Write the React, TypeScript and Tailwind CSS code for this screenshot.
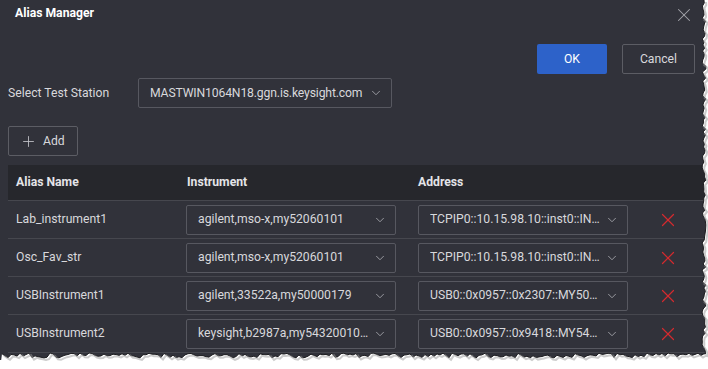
import { ChevronDown, Plus, X } from "lucide-react";

const rows = [
  { alias: "Lab_instrument1", instrument: "agilent,mso-x,my52060101", address: "TCPIP0::10.15.98.10::inst0::IN…" },
  { alias: "Osc_Fav_str", instrument: "agilent,mso-x,my52060101", address: "TCPIP0::10.15.98.10::inst0::IN…" },
  { alias: "USBInstrument1", instrument: "agilent,33522a,my50000179", address: "USB0::0x0957::0x2307::MY50…" },
  { alias: "USBInstrument2", instrument: "keysight,b2987a,my54320010…", address: "USB0::0x0957::0x9418::MY54…" },
];

function Select({ value, className }: { value: string; className: string }) {
  return (
    <div
      className={`flex items-center justify-between gap-[2px] border border-[#575860] rounded-[2px] pl-[11px] pr-[8px] text-[12.2px] text-[#d8d8dc] ${className}`}
    >
      <span className="whitespace-nowrap overflow-hidden text-ellipsis">{value}</span>
      <ChevronDown className="w-[14px] h-[14px] text-[#a6a7ad] shrink-0" strokeWidth={1.5} />
    </div>
  );
}

// torn paper edge along the right and bottom side
function TornEdge() {
  let seed = 7;
  const rnd = () => {
    seed = (seed * 9301 + 49297) % 233280;
    return seed / 233280;
  };
  const pts: string[] = [];
  for (let y = 0; y <= 356; y += 3) pts.push(`${702 + rnd() * 4},${y}`);
  for (let x = 704; x >= 0; x -= 3) pts.push(`${x},${353 + rnd() * 5}`);
  const edge = pts.join(" ");
  return (
    <svg className="absolute inset-0" width="708" height="369" viewBox="0 0 708 369">
      <polygon points={`${edge} 0,369 708,369 708,0`} fill="#ffffff" />
      <polyline points={edge} fill="none" stroke="#1b1b1e" strokeWidth="1" />
      <polyline points={edge} fill="none" stroke="#9a9a9a" strokeWidth="2" transform="translate(2,2)" opacity="0.5" />
    </svg>
  );
}

export default function App() {
  return (
    <div className="relative w-[708px] h-[369px] bg-white overflow-hidden font-['Roboto',sans-serif]">
      <div className="w-[706px] h-[360px] bg-[#31323a] flex flex-col">
        {/* Title bar */}
        <div className="flex items-center justify-between h-[26px] pl-[15px] pr-[11px]">
          <span className="text-[12.2px] font-bold text-white">Alias Manager</span>
          <X className="w-[22px] h-[22px] text-[#a4a5ab] mt-[4px]" strokeWidth={1.1} />
        </div>

        {/* Actions */}
        <div className="flex justify-end gap-[15px] pr-[11px] mt-[18px]">
          <button className="w-[70px] h-[30px] bg-[#2d62c9] rounded-[2px] text-[12.2px] text-white">OK</button>
          <button className="w-[73px] h-[30px] border border-[#5c5d64] rounded-[2px] text-[12.2px] text-[#d8d8dc]">
            Cancel
          </button>
        </div>

        {/* Test station */}
        <div className="flex items-center mt-[4px] pl-[8px]">
          <span className="w-[130px] text-[12.2px] text-[#d8d8dc]">Select Test Station</span>
          <div className="flex items-center justify-between w-[254px] h-[30px] border border-[#575860] rounded-[2px] pl-[11px] pr-[8px] text-[12.2px] tracking-[-0.15px] text-[#d8d8dc] whitespace-nowrap">
            <span>MASTWIN1064N18.ggn.is.keysight.com</span>
            <ChevronDown className="w-[14px] h-[14px] text-[#a6a7ad] shrink-0" strokeWidth={1.5} />
          </div>
        </div>

        {/* Add */}
        <div className="pl-[8px] mt-[18px]">
          <button className="flex items-center gap-[6px] w-[70px] h-[30px] border border-[#5c5d64] rounded-[2px] pl-[11px] text-[12.2px] text-[#d8d8dc]">
            <Plus className="w-[17px] h-[17px] text-[#c4c5ca]" strokeWidth={1.2} />
            Add
          </button>
        </div>

        {/* Table */}
        <div className="ml-[8px] mt-[9px]">
          <div className="grid grid-cols-[178px_232px_232px_1fr] items-center h-[36px] bg-[#26272c] border-b border-[#46474e] text-[12.2px] font-bold text-[#e4e4e8]">
            <span className="pl-[8px]">Alias Name</span>
            <span className="pl-[1px]">Instrument</span>
            <span>Address</span>
            <span />
          </div>
          {rows.map((r) => (
            <div
              key={r.alias}
              className="grid grid-cols-[178px_232px_232px_1fr] items-center h-[38px] border-b border-[#46474e] text-[12.2px] text-[#d8d8dc]"
            >
              <span className="pl-[8px]">{r.alias}</span>
              <Select value={r.instrument} className="w-[210px] h-[30px]" />
              <Select value={r.address} className="w-[210px] h-[30px]" />
              <div className="pl-[7px]">
                <X className="w-[22px] h-[22px] text-[#d42a2e]" strokeWidth={1.3} />
              </div>
            </div>
          ))}
        </div>
      </div>
      <TornEdge />
    </div>
  );
}
